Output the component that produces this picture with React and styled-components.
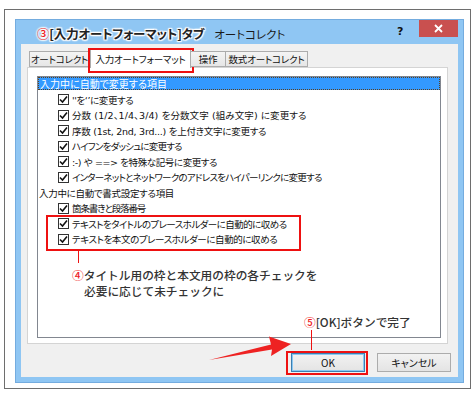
import React from "react";
import styled, { createGlobalStyle } from "styled-components";

const Global = createGlobalStyle`
  html, body { margin: 0; padding: 0; background: #fff; }
  body { font-family: "Noto Sans CJK JP", "Noto Sans", sans-serif; }
  * { box-sizing: border-box; }
`;

const Page = styled.div`
  position: relative;
  width: 474px;
  height: 393px;
  padding: 9px 0 0 4px;
  background: #fff;
  overflow: hidden;
`;

const Frame = styled.div`
  width: 467px;
  height: 380px;
  border: 1px solid #6e6e6e;
  padding: 9px 0 0 10px;
`;

const Dialog = styled.div`
  width: 449px;
  height: 364px;
  background: #8fc6f3;
  border: 1px solid #74acdf;
  display: flex;
  flex-direction: column;
`;

const TitleBar = styled.div`
  height: 24px;
  display: flex;
  align-items: flex-start;
  padding-left: 21px;
`;

const TitleText = styled.div`
  flex: 1;
  display: flex;
  align-items: center;
  height: 27px;
  font-feature-settings: "palt";
`;

const StepTitle = styled.span`
  font-size: 12.5px;
  font-weight: 700;
  color: #222;
  letter-spacing: -0.2px;
  text-shadow: 0 0 2px #fff, 0 0 2px #fff, 0 0 3px #fff, 1px 1px 1px #fff, -1px -1px 1px #fff, 1px -1px 1px #fff, -1px 1px 1px #fff;
`;

const Num = styled.span`
  color: #ee1c25;
  font-weight: 500;
`;

const RealTitle = styled.span`
  margin-left: 10px;
  font-size: 11.5px;
  color: #1a1a1a;
`;

const Help = styled.span`
  width: 22px;
  margin-top: 5px;
  font-family: "DejaVu Sans", sans-serif;
  font-weight: 700;
  font-size: 11px;
  color: #111;
`;

const Close = styled.div`
  width: 39px;
  height: 17px;
  margin-right: 5px;
  background: #c9504f;
  color: #fff;
  display: flex;
  align-items: center;
  justify-content: center;
`;

const Client = styled.div`
  flex: 1;
  margin: 0 5px 5px 5px;
  background: #f0f0f0;
  display: flex;
  flex-direction: column;
  padding-top: 4px;
`;

const TabStrip = styled.div`
  display: flex;
  align-items: flex-end;
  height: 19px;
  margin-left: 9px;
  position: relative;
  z-index: 1;
`;

const Tab = styled.div`
  position: relative;
  width: ${(p) => p.$w}px;
  height: ${(p) => (p.$active ? "20px" : "16px")};
  margin-bottom: ${(p) => (p.$active ? "-1px" : "0")};
  display: flex;
  align-items: center;
  justify-content: center;
  font-size: 9.5px;
  letter-spacing: -0.2px;
  color: #111;
  font-feature-settings: "palt";
  white-space: nowrap;
  border: 1px solid #acacac;
  border-bottom: ${(p) => (p.$active ? "none" : "1px solid #acacac")};
  margin-left: ${(p) => (p.$active ? "0" : "-1px")};
  background: ${(p) => (p.$active ? "#fff" : "linear-gradient(#f4f4f4, #e6e6e6)")};
  ${(p) =>
    p.$marked &&
    `&::after {
      content: "";
      position: absolute;
      left: -3px;
      right: -4px;
      top: -1px;
      bottom: -5px;
      border: 2px solid #ee1111;
    }`}
`;

const TabPanel = styled.div`
  margin-left: 6px;
  width: 421px;
  height: 277px;
  background: #fff;
  border: 1px solid #d4d4d4;
  padding: 8px 0 0 9px;
`;

const ListBox = styled.div`
  width: 404px;
  height: 262px;
  border: 1px solid #828790;
  font-family: "DejaVu Sans", "Noto Sans CJK JP", sans-serif;
  font-size: 9.5px;
  color: #111;
  font-feature-settings: "palt";
`;

const HeaderRow = styled.div`
  height: 13px;
  background: #3399ff;
  color: #fff;
  font-size: 10px;
  border: 1px dotted #5a4020;
  display: flex;
  align-items: center;
  padding-left: 1px;
  white-space: nowrap;
`;

const Row = styled.div`
  height: 15.5px;
  display: flex;
  align-items: center;
  padding-left: ${(p) => (p.$indent ? "20px" : "1px")};
  letter-spacing: ${(p) => (p.$ls ?? -0.8)}px;
  white-space: nowrap;
  &:nth-child(2) { margin-top: 2px; }
`;

const Box = styled.span`
  width: 11px;
  height: 11px;
  border: 1px solid #333;
  background: #fff;
  margin-right: 3px;
  display: inline-flex;
  align-items: center;
  justify-content: center;
  flex: none;
`;

const ButtonRow = styled.div`
  display: flex;
  justify-content: flex-end;
  gap: 12px;
  padding: 9px 7px 0 0;
`;

const Button = styled.div`
  position: relative;
  width: 74px;
  height: 19px;
  border: 1px solid ${(p) => (p.$def ? "#3c7fb1" : "#acacac")};
  box-shadow: ${(p) => (p.$def ? "inset 0 0 0 1px #8cc8f2" : "none")};
  background: linear-gradient(#f2f2f2, #e4e4e4);
  display: flex;
  align-items: center;
  justify-content: center;
  font-size: 10px;
  color: #111;
  font-feature-settings: "palt";
  ${(p) =>
    p.$marked &&
    `&::after {
      content: "";
      position: absolute;
      left: -6px;
      right: -4px;
      top: -3px;
      bottom: -4px;
      border: 2px solid #ee1111;
    }`}
`;

const RedBox = styled.div`
  position: absolute;
  border: 2px solid #ee1111;
  pointer-events: none;
`;

const Callout = styled.div`
  position: absolute;
  font-size: 11.7px;
  font-weight: 500;
  line-height: 16px;
  color: #333;
  white-space: nowrap;
`;

const CalloutLine = styled.div`
  padding-left: ${(p) => p.$indent || 0}px;
`;

const Overlay = styled.svg`
  position: absolute;
  left: 0;
  top: 0;
  pointer-events: none;
`;

const Check = () => (
  <Box>
    <svg width="9" height="9" viewBox="0 0 9 9">
      <path d="M1 4.5 L3.5 7 L8 1.5" fill="none" stroke="#111" strokeWidth="1.6" />
    </svg>
  </Box>
);

const items1 = [
  { t: "''を‘’に変更する", ls: -0.4 },
  { t: "分数 (1/2、1/4、3/4) を分数文字 (組み文字) に変更する", ls: 0.1 },
  { t: "序数 (1st, 2nd, 3rd...) を上付き文字に変更する", ls: -0.25 },
  { t: "ハイフンをダッシュに変更する" },
  { t: ":-) や ==> を特殊な記号に変更する", ls: -0.4 },
  { t: "インターネットとネットワークのアドレスをハイパーリンクに変更する", ls: -0.75 },
];
const items2 = [
  { t: "箇条書きと段落番号", ls: -1.1 },
  { t: "テキストをタイトルのプレースホルダーに自動的に収める", ls: -0.55 },
  { t: "テキストを本文のプレースホルダーに自動的に収める", ls: -0.4 },
];

export default function App() {
  return (
    <>
      <Global />
      <Page>
        <Frame>
          <Dialog>
            <TitleBar>
              <TitleText>
                <StepTitle>
                  <Num>③</Num>[入力オートフォーマット]タブ
                </StepTitle>
                <RealTitle>オートコレクト</RealTitle>
              </TitleText>
              <Help>?</Help>
              <Close>
                <svg width="9" height="9" viewBox="0 0 9 9">
                  <path d="M1 1 L8 8 M8 1 L1 8" stroke="#fff" strokeWidth="1.8" />
                </svg>
              </Close>
            </TitleBar>
            <Client>
              <TabStrip>
                <Tab $w={61}>オートコレクト</Tab>
                <Tab $w={101} $active $marked>入力オートフォーマット</Tab>
                <Tab $w={36}>操作</Tab>
                <Tab $w={83}>数式オートコレクト</Tab>
              </TabStrip>
              <TabPanel>
                <ListBox>
                  <HeaderRow>入力中に自動で変更する項目</HeaderRow>
                  {items1.map((r) => (
                    <Row key={r.t} $indent $ls={r.ls}>
                      <Check />
                      {r.t}
                    </Row>
                  ))}
                  <Row $ls={-0.3}>入力中に自動で書式設定する項目</Row>
                  {items2.map((r) => (
                    <Row key={r.t} $indent $ls={r.ls}>
                      <Check />
                      {r.t}
                    </Row>
                  ))}
                </ListBox>
              </TabPanel>
              <ButtonRow>
                <Button $def $marked>OK</Button>
                <Button>キャンセル</Button>
              </ButtonRow>
            </Client>
          </Dialog>
        </Frame>

        <RedBox style={{ left: 46, top: 215, width: 255, height: 36 }} />

        <Overlay width="474" height="393">
          <line x1="78.5" y1="251" x2="78.5" y2="263" stroke="#ee1111" strokeWidth="1" />
          <line x1="311.5" y1="330" x2="311.5" y2="350" stroke="#ee1111" strokeWidth="1" />
          <polygon points="209,360 272,349.5 271,356 291,344 269,336.5 271,344.5" fill="#ee2222" />
        </Overlay>

        <Callout style={{ left: 72, top: 267 }}>
          <CalloutLine>
            <Num>④</Num>タイトル用の枠と本文用の枠の各チェックを
          </CalloutLine>
          <CalloutLine $indent={12}>必要に応じて未チェックに</CalloutLine>
        </Callout>
        <Callout style={{ left: 304, top: 314 }}>
          <Num>⑤</Num>[OK]ボタンで完了
        </Callout>
      </Page>
    </>
  );
}
